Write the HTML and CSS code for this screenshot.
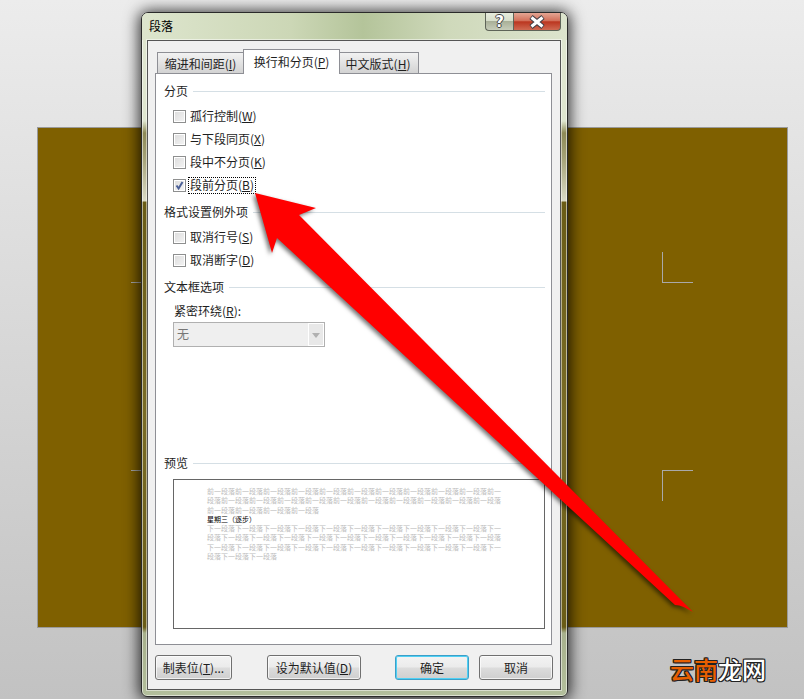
FILE: index.html
```html
<!DOCTYPE html>
<html lang="zh-CN">
<head>
    <meta charset="UTF-8">
    <meta name="viewport" content="width=device-width, initial-scale=1.0">
    <title>段落</title>
    <link rel="stylesheet" href="styles.css">
</head>
<body>
<div class="desktop">
    <div class="sheet"></div>
    <span class="mark mark-tl"></span>
    <span class="mark mark-bl"></span>
    <span class="mark mark-tr"></span>
    <span class="mark mark-br"></span>

    <div class="dialog">
        <div class="titlebar">
            <span class="caption">段落</span>
            <div class="caption-btns">
                <span class="cap-help">?</span>
                <span class="cap-close">
                    <svg width="20" height="14" viewBox="0 0 20 14"><path d="M4 2 L16 12 M16 2 L4 12" stroke="#3c3c44" stroke-width="5"/><path d="M4.5 2.5 L15.5 11.5 M15.5 2.5 L4.5 11.5" stroke="#fff" stroke-width="3"/></svg>
                </span>
            </div>
        </div>

        <div class="client">
            <div class="tabs">
                <span class="tab tab-first">缩进和间距(<u>I</u>)</span>
                <span class="tab tab-active">换行和分页(<u>P</u>)</span>
                <span class="tab tab-last">中文版式(<u>H</u>)</span>
            </div>

            <div class="page">
                <div class="group first-group"><span>分页</span></div>
                <div class="check-list">
                    <div class="check-row"><span class="box"></span><span class="lbl">孤行控制(<u>W</u>)</span></div>
                    <div class="check-row"><span class="box"></span><span class="lbl">与下段同页(<u>X</u>)</span></div>
                    <div class="check-row"><span class="box"></span><span class="lbl">段中不分页(<u>K</u>)</span></div>
                    <div class="check-row">
                        <span class="box">
                            <svg width="11" height="11" viewBox="0 0 11 11"><path d="M2.5 5.5 L4.6 8.5 L8.5 2" fill="none" stroke="#4a5f97" stroke-width="2"/></svg>
                        </span>
                        <span class="focused">段前分页(<u>B</u>)</span>
                    </div>
                </div>

                <div class="group"><span>格式设置例外项</span></div>
                <div class="check-list">
                    <div class="check-row"><span class="box"></span><span class="lbl">取消行号(<u>S</u>)</span></div>
                    <div class="check-row"><span class="box"></span><span class="lbl">取消断字(<u>D</u>)</span></div>
                </div>

                <div class="group"><span>文本框选项</span></div>
                <div class="field-label">紧密环绕(<u>R</u>):</div>
                <div class="select">
                    <span class="select-text">无</span>
                    <span class="select-arrow"></span>
                </div>

                <div class="group preview-group"><span>预览</span></div>
                <div class="preview">
                    <p>前一段落前一段落前一段落前一段落前一段落前一段落前一段落前一段落前一段落前一段落前一段落前一段落前一段落前一段落前一段落前一段落前一段落前一段落前一段落前一段落前一段落前一段落前一段落前一段落前一段落</p>
                    <p class="preview-main">星期三（逐步）</p>
                    <p>下一段落下一段落下一段落下一段落下一段落下一段落下一段落下一段落下一段落下一段落下一段落下一段落下一段落下一段落下一段落下一段落下一段落下一段落下一段落下一段落下一段落下一段落下一段落下一段落下一段落下一段落下一段落下一段落下一段落下一段落下一段落下一段落下一段落下一段落</p>
                </div>
            </div>

            <div class="buttons">
                <span class="btn btn-tabs">制表位(<u>T</u>)...</span>
                <span class="btn btn-default">设为默认值(<u>D</u>)</span>
                <span class="btn btn-ok">确定</span>
                <span class="btn btn-cancel">取消</span>
            </div>
        </div>
    </div>

    <svg class="arrow" width="804" height="699" viewBox="0 0 804 699">
        <path d="M255 193 L316 208 L299 215 L693 612 C686 608 681 605 675 605 L277 238 L272 253 Z" fill="#ff0000"/>
    </svg>

    <div class="watermark"><span class="wm-orange">云南</span>龙网</div>
</div>
</body>
</html>
```

FILE: styles.css
```css
* { box-sizing: border-box; }
html, body { margin: 0; padding: 0; }
body { font-family: "Noto Sans CJK SC", "Liberation Sans", sans-serif; font-size: 12px; color: #1e1e1e; }
u { text-underline-offset: 1px; }

.desktop { position: relative; width: 804px; height: 699px; overflow: hidden; background: linear-gradient(to bottom, #ececec, #c2c2c2); }
.sheet { position: absolute; left: 37px; top: 127px; width: 751px; height: 501px; background: #7f6000; border: 1px solid #9a9a9a; }

.mark { position: absolute; border: 0 solid #a9a9a9; }
.mark-tl { left: 131px; top: 282px; width: 10px; height: 1px; border-top-width: 1px; }
.mark-bl { left: 131px; top: 470px; width: 10px; height: 1px; border-top-width: 1px; }
.mark-tr { left: 662px; top: 252px; width: 31px; height: 31px; border-left-width: 1px; border-bottom-width: 1px; }
.mark-br { left: 662px; top: 470px; width: 31px; height: 31px; border-left-width: 1px; border-top-width: 1px; }

.dialog {
    position: absolute; left: 141px; top: 12px; width: 427px; height: 685px;
    border: 1px solid #2a2a2a; border-radius: 7px 7px 6px 6px;
    box-shadow: 0 1px 15px 2px rgba(0,0,0,.8), inset 0 0 0 1px rgba(255,255,255,.55);
    background: linear-gradient(to bottom, #dfe6d0 0, #dfe6d0 108px, #8e8a56 120px, #a5a277 145px, #dadac6 188px, #6a5c16 189px, #7a6c26 400px, #6a5c16 614px, #a7b08c 620px, #b3bf9c 684px);
}
.titlebar {
    display: flex; justify-content: space-between; height: 27px; padding: 0 6px 0 7px;
    border-radius: 6px 6px 0 0;
    background: linear-gradient(to right, #dde5cd 0, #ccd7b6 35%, #b4c49a 52%, #cfd9bb 72%, #dce4cd 100%);
}
.caption { line-height: 24px; margin-top: 1px; font-size: 12px; color: #000; }
.caption-btns { display: flex; height: 18px; }
.cap-help, .cap-close { display: flex; align-items: center; justify-content: center; height: 18px; border: 1px solid #5e6458; border-top: none; }
.cap-help {
    width: 28px; border-radius: 0 0 0 4px; border-right: none;
    font-family: "DejaVu Sans", sans-serif; font-weight: bold; font-size: 15px; color: #fff;
    text-shadow: 1px 0 #444, -1px 0 #444, 0 1px #444, 0 -1px #444;
    background: linear-gradient(to bottom, #e6ebdc 0, #d7decb 45%, #a9b098 50%, #c6ccb9 100%);
}
.cap-close {
    width: 48px; border-radius: 0 0 4px 0;
    background: linear-gradient(to bottom, #e4a694 0, #d2705a 45%, #bb3620 52%, #cf6a52 100%);
}

.client {
    margin: 0 6px 0 5px; height: 650px; padding: 8px 7px 0 7px;
    border: 1px solid #555; background: #f0f0f0;
    box-shadow: 0 0 0 1px rgba(255,255,255,.5);
}

.tabs { display: flex; height: 24px; padding-left: 2px; }
.tab { display: flex; align-items: center; justify-content: center; height: 21px; margin-top: 3px; border: 1px solid #8e8f95; border-bottom: none; background: linear-gradient(to bottom, #f2f2f2, #d3d3d3); }
.tab-first { width: 86px; border-right: none; }
.tab-active { position: relative; z-index: 1; width: 97px; height: 25px; margin-top: 0; background: #fff; padding-bottom: 2px; }
.tab-last { width: 79px; border-left: none; padding-right: 2px; }

.page { height: 572px; margin-right: 1px; padding: 9px 6px 0 8px; border: 1px solid #8e8f95; background: #fff; }

.group { display: flex; align-items: center; gap: 5px; height: 16px; margin-top: 7px; line-height: 16px; }
.group::after { content: ""; flex: 1; height: 1px; background: #d5dfe5; }
.first-group { margin-top: 0; }
.preview-group { margin-top: 108px; }

.check-list { margin-top: 6px; padding-left: 9px; }
.check-row { display: flex; align-items: center; gap: 4px; height: 23px; }
.lbl { margin-bottom: 2px; line-height: 16px; }
.box { display: flex; align-items: center; justify-content: center; width: 13px; height: 13px; border: 1px solid #8e8f8f; background: linear-gradient(135deg, #dcdcdc, #f4f4f4); box-shadow: inset 0 0 0 1px #fff; }
.focused { margin-left: -2px; padding: 0 2px; height: 17px; line-height: 16px; outline: 1px dotted #000; outline-offset: -1px; }

.field-label { height: 16px; margin-top: 8px; padding-left: 10px; line-height: 16px; }
.select { display: flex; justify-content: space-between; width: 152px; height: 25px; margin: 3px 0 0 9px; padding-left: 3px; border: 1px solid #b0b0b0; background: #efefef; color: #777; line-height: 22px; }
.select-arrow { position: relative; width: 16px; border: 1px solid #fff; background: #e8e8e8; }
.select-arrow::after { content: ""; position: absolute; left: 3px; top: 9px; border: 4px solid transparent; border-top: 5px solid #b0b0b0; border-bottom: none; }

.preview { width: 372px; height: 150px; margin: 8px 0 0 9px; padding: 7px 42px 0 33px; border: 1px solid #666; background: #fff; }
.preview p { margin: 0; font-size: 7px; line-height: 9.25px; color: #bcbcbc; }
.preview .preview-main { color: #000; }

.buttons { display: flex; margin-top: 10px; }
.btn { display: flex; align-items: center; justify-content: center; height: 25px; border: 1px solid #707070; border-radius: 3px; background: linear-gradient(to bottom, #f3f3f3 0, #ebebeb 48%, #dcdcdc 52%, #cfcfcf 100%); box-shadow: inset 0 0 0 1px rgba(255,255,255,.7); }
.btn-tabs { width: 77px; }
.btn-default { width: 94px; margin-left: 35px; }
.btn-ok { width: 74px; margin-left: 34px; border-color: #3c9fc8; box-shadow: inset 0 0 0 1px #4fd0f4; }
.btn-cancel { width: 74px; margin-left: 10px; }

.arrow { position: absolute; left: 0; top: 0; filter: drop-shadow(-2px 2px 2px rgba(0,0,0,.55)); }

.watermark {
    position: absolute; left: 670px; top: 653px; font-size: 24px; line-height: 32px; font-weight: 500; color: #fff; white-space: nowrap;
    text-shadow: 1px 0 #222, -1px 0 #222, 0 1px #222, 0 -1px #222, 1px 1px #222, -1px -1px #222, 1px -1px #222, -1px 1px #222;
}
.wm-orange { color: #e85f00; }
```
